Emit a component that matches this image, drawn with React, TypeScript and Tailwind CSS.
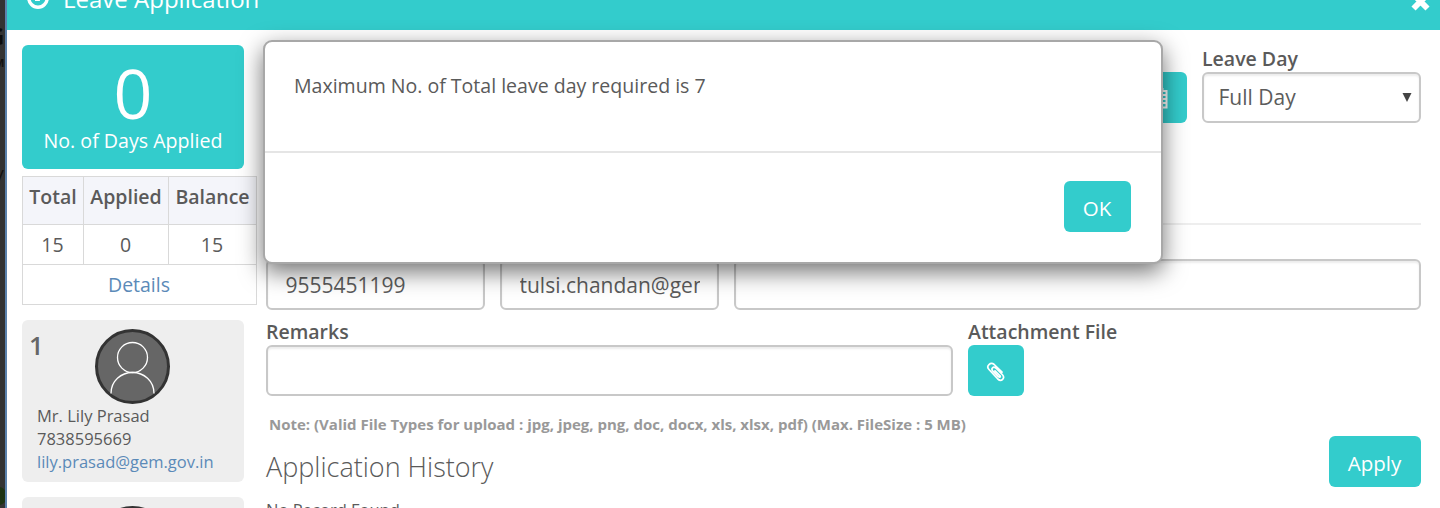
import React from "react";

const input =
  "h-[51px] rounded-[6px] border-2 border-[#c8c8c8] bg-white px-[17.5px] text-[21px] text-[#5c5c5c] shadow-[inset_0_2px_2px_rgba(0,0,0,0.075)] flex items-center overflow-hidden whitespace-nowrap";
const button = "flex items-center justify-center rounded-[6px] bg-[#33cccc] text-white";

function Avatar() {
  return (
    <svg width="75" height="75" viewBox="0 0 75 75" fill="none">
      <circle cx="37.5" cy="37.5" r="36" fill="#666" stroke="#333" strokeWidth="3" />
      <g stroke="#fff" strokeWidth="1.3">
        <circle cx="37.5" cy="28.5" r="15" />
        <path d="M16 64.500C16 52 26 43.500 37.500 43.500S59 52 59 64.500" />
      </g>
    </svg>
  );
}

function Paperclip() {
  return (
    <svg width="20" height="20" viewBox="0 0 20 20" fill="none" stroke="#fff" strokeWidth="1.7" strokeLinecap="round" strokeLinejoin="round">
      <path d="M16 10.200L8.200 2.500C4.500-.5-.3 4 3 7.500L11.800 17C15.500 20.300 19.500 16 16.300 12.500L9.800 6C7.300 4 4.600 6.500 6.800 9L12.500 14.800C14 15.700 14.800 14.500 13.700 13.500L9 8.800" />
    </svg>
  );
}

export default function App() {
  return (
    <div className="relative flex h-[508px] w-[1440px] overflow-hidden bg-white font-['Open_Sans',sans-serif] text-[19.5px] text-[#5a5a5a]">
      <div className="relative w-[5px] shrink-0 overflow-hidden bg-[#333]">
        <div className="absolute -left-[13px] top-[24px] text-[24px] font-bold leading-[24px] text-[#0c0c0c]">G</div>
        <div className="absolute -left-[6px] top-[57px] text-[11px] font-bold leading-[12px] text-[#111]">M</div>
        <div className="absolute -left-[3px] top-[166px] text-[19px] leading-[20px] text-[#111]">/</div>
        <div className="absolute -left-[8px] top-[487px] h-[18px] w-[14px] rounded-full bg-[#1c3313]" />
      </div>
      <div className="w-[2px] shrink-0 bg-[#5b82ad]" />
      <div className="flex min-w-0 flex-1 flex-col">
        <header className="flex h-[30px] shrink-0 items-end justify-between bg-[#33cccc] pl-[20px] pr-[10px] text-white">
          <div className="flex items-end">
            <svg className="mb-[21px]" width="22" height="22" viewBox="0 0 22 22" fill="none" stroke="#fff">
              <circle cx="11" cy="11" r="9.200" strokeWidth="3.400" />
              <path d="M12 5v8H8" strokeWidth="1.800" />
            </svg>
            <span className="mb-[13px] ml-[14px] whitespace-nowrap text-[24px] leading-[36px]">Leave Application</span>
          </div>
          <svg className="mb-[19px]" width="19" height="19" viewBox="0 0 19 19" stroke="#fff" strokeWidth="5.800">
            <path d="M2.500 2.500l14 14M16.500 2.500l-14 14" />
          </svg>
        </header>

        <div className="flex pl-[15px] pt-[15px]">
          <aside className="w-[222px] shrink-0">
            <div className="flex h-[124px] flex-col items-center rounded-[6px] bg-[#33cccc] text-white">
              <div className="h-[82px] pt-[13px] text-[68px] leading-[70px]">0</div>
              <div className="whitespace-nowrap text-[19.600px] leading-[28px]">No. of Days Applied</div>
            </div>
            <table className="mt-[7px] w-[235px] table-fixed border-collapse text-center text-[19.5px]">
              <colgroup>
                <col className="w-[61px]" />
                <col className="w-[85px]" />
                <col className="w-[88px]" />
              </colgroup>
              <tbody>
                <tr className="h-[48px] bg-[#f4f5fa] align-top font-semibold">
                  {["Total", "Applied", "Balance"].map((h) => (
                    <td key={h} className="border border-[#d9d9d9] pt-[6px] leading-[28px]">{h}</td>
                  ))}
                </tr>
                <tr className="h-[40px]">
                  {["15", "0", "15"].map((v, i) => (
                    <td key={i} className="border border-[#d9d9d9] pr-[1px] leading-[28px]">{v}</td>
                  ))}
                </tr>
                <tr className="h-[40px]">
                  <td colSpan={3} className="border border-[#d9d9d9] pr-[1px] leading-[28px] text-[#5b8ab8]">Details</td>
                </tr>
              </tbody>
            </table>
            <div className="relative mt-[15px] h-[162px] rounded-[6px] bg-[#eee] pt-[9px]">
              <span className="absolute left-[7px] top-[8px] text-[25.500px] font-semibold leading-[34px] text-[#666]">1</span>
              <div className="ml-[73px] h-[75px]"><Avatar /></div>
              <div className="pl-[15px] text-[16.500px] leading-[23px]">
                <div>Mr. Lily Prasad</div>
                <div>7838595669</div>
                <div className="text-[#5b8ab8]">lily.prasad@gem.gov.in</div>
              </div>
            </div>
            <div className="mt-[15px] h-[162px] rounded-[6px] bg-[#eee] pt-[9px]">
              <div className="ml-[73px]"><Avatar /></div>
            </div>
          </aside>

          <main className="ml-[22px] w-[1155px] shrink-0">
            <div className="flex justify-end">
              <div className={`${button} mr-[15px] mt-[27px] h-[51px] w-[56px]`}>
                <svg className="ml-[-4px]" width="21" height="22" viewBox="0 0 21 22" fill="none" stroke="#fff" strokeWidth="2">
                  <path d="M1.500 4h18v16.500h-18zM2 8h18M2 12h18M2 16h18M6 8v12M10.500 8v12M15 8v12M5.500 1v4M15.500 1v4" />
                </svg>
              </div>
              <div className="w-[219px]">
                <div className="h-[27px] font-semibold leading-[28px]">Leave Day</div>
                <div className={`${input} justify-between !pl-[14.5px] !pr-[7.5px]`}>
                  <span>Full Day</span>
                  <svg width="10" height="9" viewBox="0 0 10 9"><path d="M0.500 0h9L5 9z" fill="#444" /></svg>
                </div>
              </div>
            </div>
            <div className="mt-[100px] h-[2px] bg-[#eee]" />
            <div className="mt-[34px] flex gap-[15px]">
              <div className={`${input} w-[219px] pt-[2px]`}>9555451199</div>
              <div className={`${input} w-[219px] pt-[2px]`}><span className="overflow-hidden">tulsi.chandan@gem.gov.in</span></div>
              <div className={`${input} flex-1`} />
            </div>
            <div className="mt-[8px] flex gap-[15px]">
              <div className="w-[687px]">
                <div className="h-[27px] font-semibold leading-[28px]">Remarks</div>
                <div className={input} />
              </div>
              <div>
                <div className="h-[27px] font-semibold leading-[28px]">Attachment File</div>
                <div className={`${button} h-[51px] w-[56px] pt-[2px]`}><Paperclip /></div>
              </div>
            </div>
            <div className="pl-[3px] pt-[17px] text-[15px] font-bold leading-[22px] text-[#999]">
              Note: (Valid File Types for upload : jpg, jpeg, png, doc, docx, xls, xlsx, pdf) (Max. FileSize : 5 MB)
            </div>
            <div className="flex justify-between pt-[1px]">
              <h3 className="pt-[12px] text-[27px] font-light leading-[38px]">Application History</h3>
              <div className={`${button} h-[51px] w-[92px] pr-[1px] pt-[4px] text-[20.5px]`}>Apply</div>
            </div>
            <div className="mt-[11px] text-[16.500px] leading-[23px]">No Record Found</div>
          </main>
        </div>
      </div>

      <div role="dialog" className="absolute left-[263px] top-[40px] h-[224px] w-[900px] rounded-[9px] border-2 border-[#a8a8a8] bg-white shadow-[0_8px_23px_rgba(0,0,0,0.55)]">
        <div className="h-[111px] border-b-2 border-[#e5e5e5] pl-[29px] pt-[30px] text-[19.540px] leading-[28px]">Maximum No. of Total leave day required is 7</div>
        <div className="flex justify-end pr-[30px] pt-[28px]">
          <div className={`${button} h-[51px] w-[67px] pr-[1px] pt-[4px] text-[20.5px]`}>OK</div>
        </div>
      </div>
    </div>
  );
}
